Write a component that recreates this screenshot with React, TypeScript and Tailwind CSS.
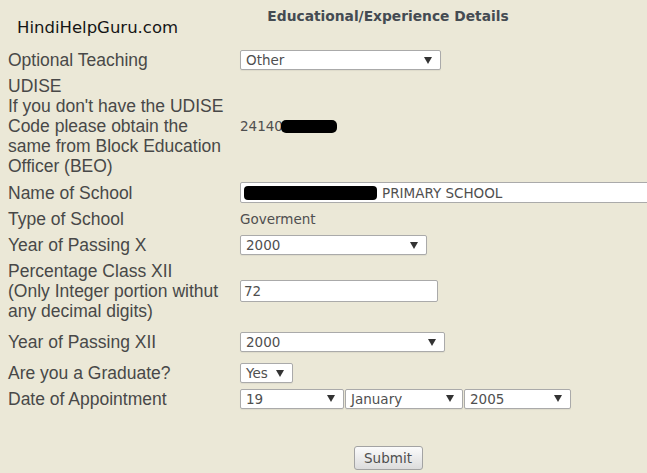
import React from 'react';

const labelCls = "font-['Liberation_Sans',Arial,sans-serif] text-[17.5px] leading-[20px] text-[#484848]";
const fieldCls = "font-['DejaVu_Sans',Verdana,sans-serif] text-[13.5px] leading-[18px] text-[#4f4f4f]";

function Arrow() {
  return (
    <svg width="8" height="7" viewBox="0 0 8 7" className="shrink-0">
      <polygon points="0,0 8,0 4,7" fill="#333" />
    </svg>
  );
}

function Select({ value, className }: { value: string; className: string }) {
  return (
    <div
      className={`flex items-center justify-between h-[20px] bg-white border border-[#aaaaaa] rounded-[2px] pl-[5px] pr-[8px] shadow-[0_1px_1px_rgba(0,0,0,0.06)] ${className}`}
    >
      <span className={fieldCls}>{value}</span>
      <Arrow />
    </div>
  );
}

function Row({
  label,
  height,
  children,
}: {
  label: React.ReactNode;
  height: string;
  children?: React.ReactNode;
}) {
  return (
    <div className={`flex items-center ${height}`}>
      <div className={`w-[240px] shrink-0 pl-[8px] whitespace-nowrap ${labelCls}`}>{label}</div>
      <div className="flex-1 flex items-center gap-[1px]">{children}</div>
    </div>
  );
}

export default function App() {
  return (
    <div className="relative w-[647px] h-[473px] overflow-hidden bg-[#ebe8d7]">
      <div className="w-[776px]">
        <div className="h-[47px] pt-[6px] text-center">
          <h2 className="font-['DejaVu_Sans',Verdana,sans-serif] font-bold text-[13.8px] leading-[20px] text-[#444b52]">
            Educational/Experience Details
          </h2>
        </div>

        <Row label="Optional Teaching" height="h-[26px]">
          <Select value="Other" className="w-[201px]" />
        </Row>

        <Row
          height="h-[106px]"
          label={
            <>
              UDISE
              <br />
              If you don't have the UDISE
              <br />
              Code please obtain the
              <br />
              same from Block Education
              <br />
              Officer (BEO)
            </>
          }
        >
          <div className="flex items-center">
            <span className={fieldCls}>24140</span>
            <span className="-ml-[2px] w-[56px] h-[13px] rounded-[5px] bg-black" />
          </div>
        </Row>

        <Row label="Name of School" height="h-[27px]">
          <div className="flex items-center w-[440px] h-[21px] bg-white border border-[#aaaaaa] rounded-[2px] pl-[3px]">
            <span className="w-[133px] h-[14px] rounded-[4px] bg-black" />
            <span className={`ml-[5px] ${fieldCls}`}>PRIMARY SCHOOL</span>
          </div>
        </Row>

        <Row label="Type of School" height="h-[26px]">
          <span className={fieldCls}>Goverment</span>
        </Row>

        <Row label="Year of Passing X" height="h-[26px]">
          <Select value="2000" className="w-[187px]" />
        </Row>

        <Row
          height="h-[66px]"
          label={
            <>
              Percentage Class XII
              <br />
              (Only Integer portion withut
              <br />
              any decimal digits)
            </>
          }
        >
          <div className="flex items-center w-[198px] h-[22px] bg-white border border-[#aaaaaa] rounded-[2px] pl-[3px]">
            <span className={fieldCls}>72</span>
          </div>
        </Row>

        <Row label="Year of Passing XII" height="h-[36px]">
          <Select value="2000" className="w-[205px]" />
        </Row>

        <Row label="Are you a Graduate?" height="h-[26px]">
          <Select value="Yes" className="w-[53px]" />
        </Row>

        <Row label="Date of Appointment" height="h-[25px]">
          <Select value="19" className="w-[104px]" />
          <Select value="January" className="w-[118px]" />
          <Select value="2005" className="w-[107px]" />
        </Row>

        <div className="flex justify-center pt-[35px]">
          <button
            type="button"
            className={`w-[69px] h-[24px] rounded-[3px] border border-[#a3a3a3] bg-gradient-to-b from-[#fbfbfb] to-[#dcdcdc] ${fieldCls}`}
          >
            Submit
          </button>
        </div>
      </div>

      <div className="absolute left-[17px] top-[18px] font-['DejaVu_Sans',Verdana,sans-serif] text-[16.5px] leading-[20px] text-[#151515]">
        HindiHelpGuru.com
      </div>
    </div>
  );
}
